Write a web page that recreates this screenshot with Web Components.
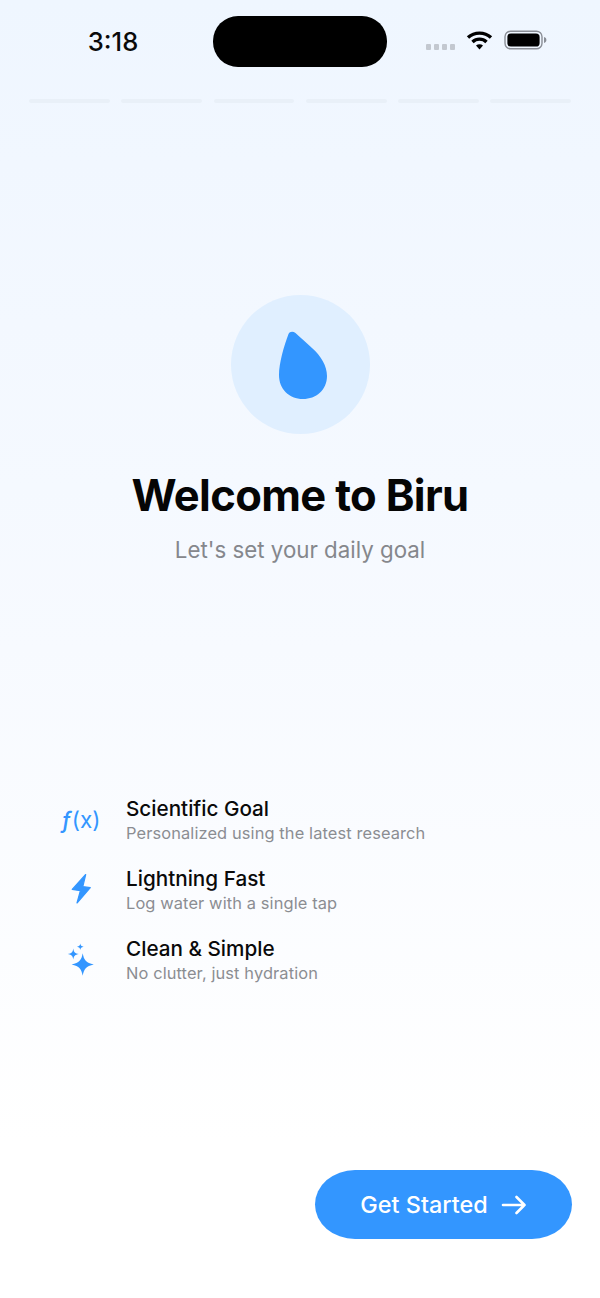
<!DOCTYPE html>
<html lang="en">
<head>
<meta charset="utf-8">
<title>Biru</title>
<style>
  html, body { margin: 0; padding: 0; }
  body { font-family: Inter, "Liberation Sans", sans-serif; background: #fff; }
</style>
</head>
<body>
<biru-app>
  <biru-status time="3:18"></biru-status>
  <biru-progress steps="6"></biru-progress>
  <biru-hero>
    <span slot="title">Welcome to Biru</span>
    <span slot="sub">Let's set your daily goal</span>
  </biru-hero>
  <biru-features>
    <biru-feature heading="Scientific Goal" text="Personalized using the latest research">
      <span class="fx" style="font-size:22.5px;line-height:24px;font-weight:400;color:#3396ff;white-space:nowrap;margin-top:-1px"><i style="font-weight:500;margin-right:1px">ƒ</i>(x)</span>
    </biru-feature>
    <biru-feature heading="Lightning Fast" text="Log water with a single tap">
      <svg width="22" height="33" viewBox="0 0 22 33" style="margin-top:-3px"><path d="M15.7 2.5 L2.2 17.4 L10.4 18.7 L7 31 L20.3 15.7 L12.8 14.6 Z" fill="#3396ff" stroke="#3396ff" stroke-width="1.2" stroke-linejoin="round"/></svg>
    </biru-feature>
    <biru-feature heading="Clean &amp; Simple" text="No clutter, just hydration">
      <svg width="30" height="34" viewBox="0 0 30 34" fill="#3396ff" style="margin:-2px 0 0 -2px"><path d="M17.7 11.2 C18.9 18 21 20.8 28.8 22.5 C21 24.2 18.9 27 17.7 33.8 C16.5 27 14.4 24.2 6.6 22.5 C14.4 20.8 16.5 18 17.7 11.2 Z"/><path d="M8.3 6.4 C8.9 10.2 10 11.3 13.9 12 C10 12.7 8.9 13.8 8.3 17.6 C7.7 13.8 6.6 12.7 2.7 12 C6.6 11.3 7.7 10.2 8.3 6.4 Z"/><path d="M15.3 1.4 C15.6 3.5 16.3 4.2 18.6 4.7 C16.3 5.2 15.6 5.9 15.3 8 C15 5.9 14.3 5.2 12 4.7 C14.3 4.2 15 3.5 15.3 1.4 Z"/></svg>
    </biru-feature>
  </biru-features>
  <biru-button>Get Started</biru-button>
</biru-app>

<script>
class BiruApp extends HTMLElement {
  constructor() {
    super();
    this.attachShadow({ mode: 'open' });
    this.shadowRoot.innerHTML = `
      <style>
        :host {
          display: flex;
          flex-direction: column;
          width: 600px;
          height: 1298px;
          overflow: hidden;
          background: linear-gradient(180deg, #eff6ff 0%, #f7faff 50%, #ffffff 88%);
        }
      </style>
      <slot></slot>`;
  }
}

class BiruStatus extends HTMLElement {
  constructor() {
    super();
    this.attachShadow({ mode: 'open' });
    this.shadowRoot.innerHTML = `
      <style>
        :host { display: grid; grid-template-columns: 213px 174px 213px; padding-top: 16px; height: 51px; }
        .time { font-size: 25.6px; font-weight: 550; color: #0a0a0a; text-align: center; line-height: 52px; margin-left: 13px; height: 51px; }
        .island { background: #000; border-radius: 25px; height: 51px; }
        .right { display: flex; align-items: flex-start; padding-left: 39px; }
        .dots { display: flex; gap: 3px; margin-top: 28px; }
        .dots span { width: 5px; height: 6px; border-radius: 1px; background: #c3c8d0; }
        .wifi { margin: 14px 0 0 11px; }
        .batt { margin: 14px 0 0 11px; }
      </style>
      <div class="time"></div>
      <div class="island"></div>
      <div class="right">
        <div class="dots"><span></span><span></span><span></span><span></span></div>
        <svg class="wifi" width="27" height="20" viewBox="0 0 27 20" fill="none" stroke="#000" stroke-width="3.4">
          <path d="M2 7.6 C8.5 1.6 18.5 1.6 25 7.6"/>
          <path d="M6.5 12 C10.5 8.2 16.5 8.2 20.5 12"/>
          <path d="M10 15.6 L13.5 19.4 L17 15.6 C15 13.8 12 13.8 10 15.6 Z" fill="#000" stroke="none"/>
        </svg>
        <svg class="batt" width="43" height="20" viewBox="0 0 43 20">
          <rect x="1" y="1.2" width="37" height="17.6" rx="5.6" fill="none" stroke="#8a8e96" stroke-width="1.4"/>
          <rect x="3.4" y="3.5" width="32.2" height="13" rx="3.6" fill="#000"/>
          <path d="M40 7 C41.6 7.4 42.4 8.6 42.4 10 C42.4 11.4 41.6 12.6 40 13 Z" fill="#8a8e96"/>
        </svg>
      </div>`;
  }
  connectedCallback() {
    this.shadowRoot.querySelector('.time').textContent = this.getAttribute('time');
  }
}

class BiruProgress extends HTMLElement {
  constructor() {
    super();
    this.attachShadow({ mode: 'open' });
  }
  connectedCallback() {
    let bars = '';
    for (let i = 0; i < Number(this.getAttribute('steps')); i++) bars += '<span></span>';
    this.shadowRoot.innerHTML = `
      <style>
        :host { display: flex; gap: 11.5px; margin-top: 32px; padding: 0 29px 0 29px; }
        span { flex: 1; height: 4px; border-radius: 2px; background: #e9f0f8; }
      </style>
      ${bars}`;
  }
}

class BiruHero extends HTMLElement {
  constructor() {
    super();
    this.attachShadow({ mode: 'open' });
    this.shadowRoot.innerHTML = `
      <style>
        :host { display: flex; flex-direction: column; align-items: center; margin-top: 192px; }
        .circle { width: 139px; height: 139px; border-radius: 50%; background: #e0efff; display: flex; align-items: center; justify-content: center; }
        .circle svg { display: block; margin: 2px 0 0 5px; }
        .title { margin-top: 34px; font-size: 43.5px; line-height: 54px; font-weight: 700; color: #050505; letter-spacing: -.65px; }
        .sub { margin-top: 14px; font-size: 22.3px; line-height: 28px; color: #85878c; }
      </style>
      <div class="circle">
        <svg width="48" height="69" viewBox="0 0 48 69"><path d="M9.5 3 C10.7 0.3 14 0 16.5 2 C22 7 27 11.5 33 17 C42 25 48 35 48 45 C48 59 37 68 24 68 C10 68 0 58 0 44 C0 32 5 15 9.5 3 Z" fill="#3396ff"/></svg>
      </div>
      <div class="title"><slot name="title"></slot></div>
      <div class="sub"><slot name="sub"></slot></div>`;
  }
}

class BiruFeatures extends HTMLElement {
  constructor() {
    super();
    this.attachShadow({ mode: 'open' });
    this.shadowRoot.innerHTML = `
      <style>
        :host { display: flex; flex-direction: column; margin-top: 221px; padding-left: 56px; }
      </style>
      <slot></slot>`;
  }
}

class BiruFeature extends HTMLElement {
  constructor() {
    super();
    this.attachShadow({ mode: 'open' });
    this.shadowRoot.innerHTML = `
      <style>
        :host { display: flex; align-items: center; height: 70px; }
        .icon { width: 50px; display: flex; justify-content: center; flex: none; margin-right: 20px; }
        .head { font-size: 20.7px; line-height: 26px; font-weight: 550; color: #0a0a0a; margin-top: -1px; }
        .text { font-size: 16.4px; line-height: 22px; color: #8b8d92; letter-spacing: .12px; }
      </style>
      <div class="icon"><slot></slot></div>
      <div><div class="head"></div><div class="text"></div></div>`;
  }
  connectedCallback() {
    this.shadowRoot.querySelector('.head').textContent = this.getAttribute('heading');
    this.shadowRoot.querySelector('.text').textContent = this.getAttribute('text');
  }
}

class BiruButton extends HTMLElement {
  constructor() {
    super();
    this.attachShadow({ mode: 'open' });
    this.shadowRoot.innerHTML = `
      <style>
        :host { display: flex; justify-content: flex-end; margin-top: auto; padding: 0 28px 59px 0; }
        button { display: flex; align-items: center; justify-content: center; gap: 13px; width: 257px; height: 69px; border: 0; padding: 0; border-radius: 40px / 34.5px; background: #3396ff; color: #fff; font: 500 23.4px Inter, "Liberation Sans", sans-serif; }
      </style>
      <button><slot></slot>
        <svg width="26" height="20" viewBox="0 0 26 20" fill="none" stroke="#fff" stroke-width="2.6" stroke-linecap="round" stroke-linejoin="round"><path d="M2 10 H23.5 M15.5 2 L23.5 10 L15.5 18"/></svg>
      </button>`;
  }
}

customElements.define('biru-app', BiruApp);
customElements.define('biru-status', BiruStatus);
customElements.define('biru-progress', BiruProgress);
customElements.define('biru-hero', BiruHero);
customElements.define('biru-features', BiruFeatures);
customElements.define('biru-feature', BiruFeature);
customElements.define('biru-button', BiruButton);
</script>
</body>
</html>
